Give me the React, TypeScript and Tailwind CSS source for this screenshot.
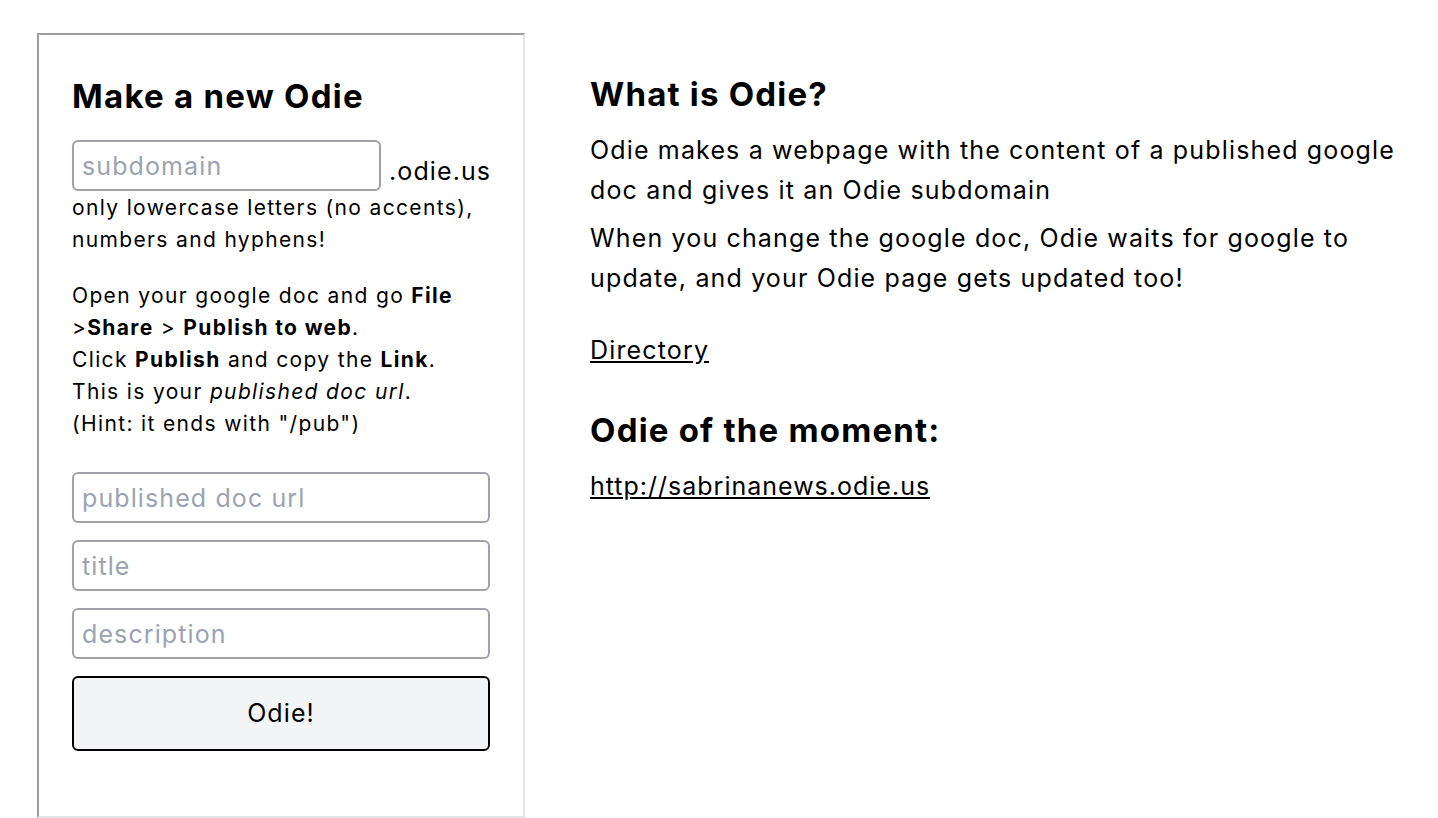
import React from "react";

export default function App() {
  return (
    <div className="min-h-screen bg-white text-black flex items-start gap-[65px] pl-[37px] pt-[33px]" style={{ fontFamily: "Inter, 'Noto Sans', sans-serif" }}>
      {/* ─── Left: form card ─── */}
      <div className="w-[488px] h-[785px] shrink-0 border-2 border-t-[#9c9ca1] border-l-[#9c9ca1] border-r-[#e4e4ea] border-b-[#e4e4ea] px-[33px] pt-[39px]">
        <h2 className="m-0 text-[33px] font-bold leading-[44px] tracking-[1.25px]">Make a new Odie</h2>

        <div className="mt-[22px] flex items-end gap-[8px]">
          <input
            placeholder="subdomain"
            className="w-[309px] h-[51px] rounded-[6px] border-2 border-[#a1a1aa] px-[8px] text-[25px] tracking-[1.1px] placeholder:text-[#9ca3af] outline-none"
          />
          <span className="text-[25px] leading-[34px] pb-[3px] tracking-[1.1px]">.odie.us</span>
        </div>
        <div className="text-[21px] leading-[32px] tracking-[1.35px]">
          <p className="m-0 mt-[1px]">only lowercase letters (no accents), numbers and hyphens!</p>

          <p className="m-0 mt-[24px]">
            Open your google doc and go <b>File</b> &gt;<b>Share</b> &gt; <b>Publish to web</b>.
            <br />
            Click <b>Publish</b> and copy the <b>Link</b>.
            <br />
            This is your <i>published doc url</i>.
            <br />
            (Hint: it ends with "/pub")
          </p>
        </div>

        <div className="mt-[32px] flex flex-col gap-[17px]">
          {["published doc url", "title", "description"].map((p) => (
            <input
              key={p}
              placeholder={p}
              className="w-full h-[51px] rounded-[6px] border-2 border-[#a1a1aa] px-[8px] text-[25px] tracking-[1.1px] placeholder:text-[#9ca3af] outline-none"
            />
          ))}
          <button className="w-full h-[75px] rounded-[6px] border-2 border-black bg-[#f3f4f6] text-[25px] tracking-[1.1px]">
            Odie!
          </button>
        </div>
      </div>

      {/* ─── Right: about ─── */}
      <div className="w-[820px] pt-[39px]">
        <h2 className="m-0 text-[33px] font-bold leading-[44px] tracking-[1.2px]">What is Odie?</h2>
        <div className="text-[25px] leading-[40px] tracking-[1.15px]">
          <p className="m-0 mt-[14px]">
            Odie makes a webpage with the content of a published google doc and gives it an Odie subdomain
          </p>
          <p className="m-0 mt-[8px]">
            When you change the google doc, Odie waits for google to update, and your Odie page gets updated too!
          </p>
          <p className="m-0 mt-[32px]">
            <a href="#" className="underline text-black">Directory</a>
          </p>
        </div>
        <h2 className="m-0 mt-[38px] text-[33px] font-bold leading-[44px] tracking-[1.2px]">Odie of the moment:</h2>
        <p className="m-0 mt-[14px] text-[25px] leading-[40px] tracking-[1px]">
          <a href="#" className="underline text-black">http://sabrinanews.odie.us</a>
        </p>
      </div>
    </div>
  );
}
